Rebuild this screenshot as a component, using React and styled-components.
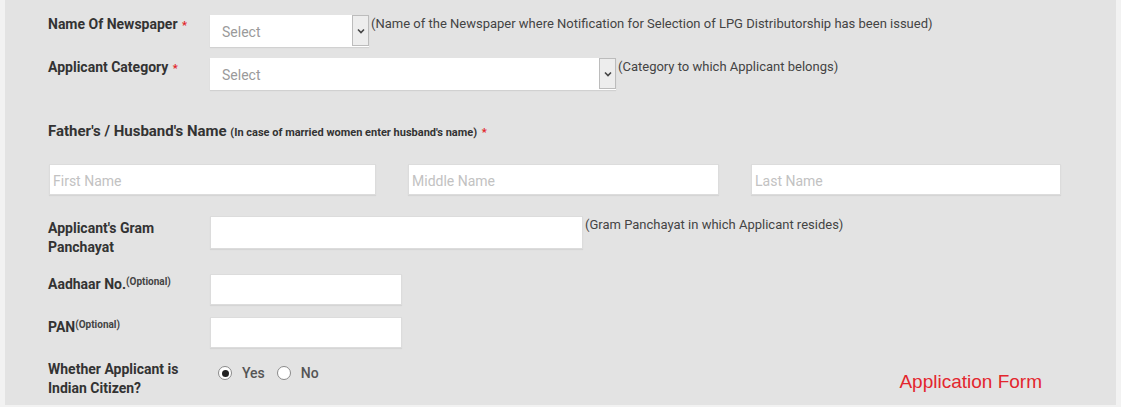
import React from "react";
import styled, { createGlobalStyle } from "styled-components";

const GlobalStyle = createGlobalStyle`
  body {
    margin: 0;
    background: #f2f2f2;
    font-family: Roboto, "Liberation Sans", sans-serif;
  }
`;

const App = () => {
  return (
    <>
      <GlobalStyle />
      <Panel>
        <Row>
          <Label>
            Name Of Newspaper <Star>*</Star>
          </Label>
          <Control>
            <SelectBox width={159}>
              <span>Select</span>
              <Arrow>
                <Chevron />
              </Arrow>
            </SelectBox>
            <Help>
              (Name of the Newspaper where Notification for Selection of LPG
              Distributorship has been issued)
            </Help>
          </Control>
        </Row>

        <Row gap={11}>
          <Label>
            Applicant Category <Star>*</Star>
          </Label>
          <Control>
            <SelectBox width={406}>
              <span>Select</span>
              <Arrow>
                <Chevron />
              </Arrow>
            </SelectBox>
            <Help>(Category to which Applicant belongs)</Help>
          </Control>
        </Row>

        <Title>
          Father's / Husband's Name{" "}
          <small>(In case of married women enter husband's name)</small>{" "}
          <Star>*</Star>
        </Title>

        <NameRow>
          <TextBox width={327} placeholder="First Name" />
          <TextBox width={311} placeholder="Middle Name" />
          <TextBox width={310} placeholder="Last Name" />
        </NameRow>

        <Row gap={21}>
          <Label wrap>
            Applicant's Gram
            <br />
            Panchayat
          </Label>
          <Control>
            <TextBox width={373} height={33} />
            <Help>(Gram Panchayat in which Applicant resides)</Help>
          </Control>
        </Row>

        <Row gap={17}>
          <Label offset={2}>
            Aadhaar No.<Sup>(Optional)</Sup>
          </Label>
          <Control>
            <TextBox width={192} height={31} />
          </Control>
        </Row>

        <Row gap={12}>
          <Label offset={2}>
            PAN<Sup>(Optional)</Sup>
          </Label>
          <Control>
            <TextBox width={192} height={31} />
          </Control>
        </Row>

        <Row gap={9}>
          <Label wrap>
            Whether Applicant is
            <br />
            Indian Citizen?
          </Label>
          <Control>
            <RadioGroup>
              <Choice>
                <Radio checked />
                Yes
              </Choice>
              <Choice>
                <Radio />
                No
              </Choice>
            </RadioGroup>
            <FormTitle>Application Form</FormTitle>
          </Control>
        </Row>
      </Panel>
    </>
  );
};

export default App;

const Panel = styled.div`
  margin-left: 5px;
  width: 1111px;
  height: 405px;
  box-sizing: border-box;
  padding: 15px 0 0 43px;
  background: #e3e3e3;
  color: #333;
`;

const Row = styled.div`
  display: grid;
  grid-template-columns: 162px 1fr;
  align-items: start;
  margin-top: ${(p) => p.gap || 0}px;
`;

const Label = styled.div`
  font-size: 14px;
  font-weight: 700;
  line-height: ${(p) => (p.wrap ? "19px" : "16px")};
  padding-top: ${(p) => (p.wrap ? 3 : p.offset ?? 1)}px;
  color: #333;
`;

const Star = styled.span`
  color: #e2222a;
  font-size: 11px;
  margin-left: 1px;
`;

const Sup = styled.sup`
  font-size: 10px;
  font-weight: 700;
  color: #444;
  vertical-align: 4px;
  line-height: 0;
`;

const Control = styled.div`
  display: flex;
  align-items: flex-start;
`;

const SelectBox = styled.div`
  position: relative;
  width: ${(p) => p.width}px;
  height: 32px;
  box-sizing: border-box;
  background: #fff;
  box-shadow: 0 1px 1px rgba(0, 0, 0, 0.08);
  font-size: 14px;
  color: #9a9a9a;
  display: flex;
  align-items: center;
  padding-left: 12px;
  padding-top: 2px;
`;

const Arrow = styled.div`
  position: absolute;
  right: 0;
  top: 0;
  width: 17px;
  height: 31px;
  box-sizing: border-box;
  background: #ededed;
  border: 1px solid #bcbcbc;
  display: flex;
  align-items: center;
  justify-content: center;
`;

const Chevron = () => (
  <svg width="8" height="6" viewBox="0 0 8 6">
    <path d="M1 1.5 L4 4.5 L7 1.5" fill="none" stroke="#444" strokeWidth="1.6" />
  </svg>
);

const Help = styled.div`
  font-size: 13px;
  line-height: 16px;
  padding-top: 1px;
  margin-left: 2px;
  color: #444;
  white-space: nowrap;
`;

const Title = styled.div`
  margin-top: 31px;
  font-size: 15px;
  font-weight: 700;
  line-height: 20px;
  color: #333;

  small {
    font-size: 11px;
    font-weight: 700;
  }
`;

const NameRow = styled.div`
  display: flex;
  gap: 32px;
  margin-top: 21px;
  margin-left: 1px;
`;

const TextBox = styled.input`
  width: ${(p) => p.width}px;
  height: ${(p) => p.height || 31}px;
  box-sizing: border-box;
  border: 1px solid #dcdcdc;
  background: #fff;
  box-shadow: 0 1px 1px rgba(0, 0, 0, 0.06);
  padding: 2px 0 0 3px;
  font-family: Roboto, sans-serif;
  font-size: 14px;
  color: #333;
  outline: none;

  &::placeholder {
    color: #c2c2c2;
  }
`;

const RadioGroup = styled.div`
  display: flex;
  align-items: center;
  gap: 12px;
  padding-left: 8px;
  padding-top: 8px;
`;

const Choice = styled.label`
  display: flex;
  align-items: center;
  gap: 10px;
  font-size: 14px;
  line-height: 16px;
  font-weight: 500;
  color: #555;
`;

const Radio = styled.span`
  width: 14px;
  height: 14px;
  box-sizing: border-box;
  border-radius: 50%;
  border: 1px solid #8a8a8a;
  background: #fff;
  display: flex;
  align-items: center;
  justify-content: center;

  &::after {
    content: "";
    width: 7px;
    height: 7px;
    border-radius: 50%;
    background: ${(p) => (p.checked ? "#222" : "transparent")};
  }
`;

const FormTitle = styled.div`
  margin: 15px 74px 0 auto;
  font-family: "Liberation Sans", Arial, sans-serif;
  font-size: 19px;
  line-height: 20px;
  color: #e3262e;
`;
